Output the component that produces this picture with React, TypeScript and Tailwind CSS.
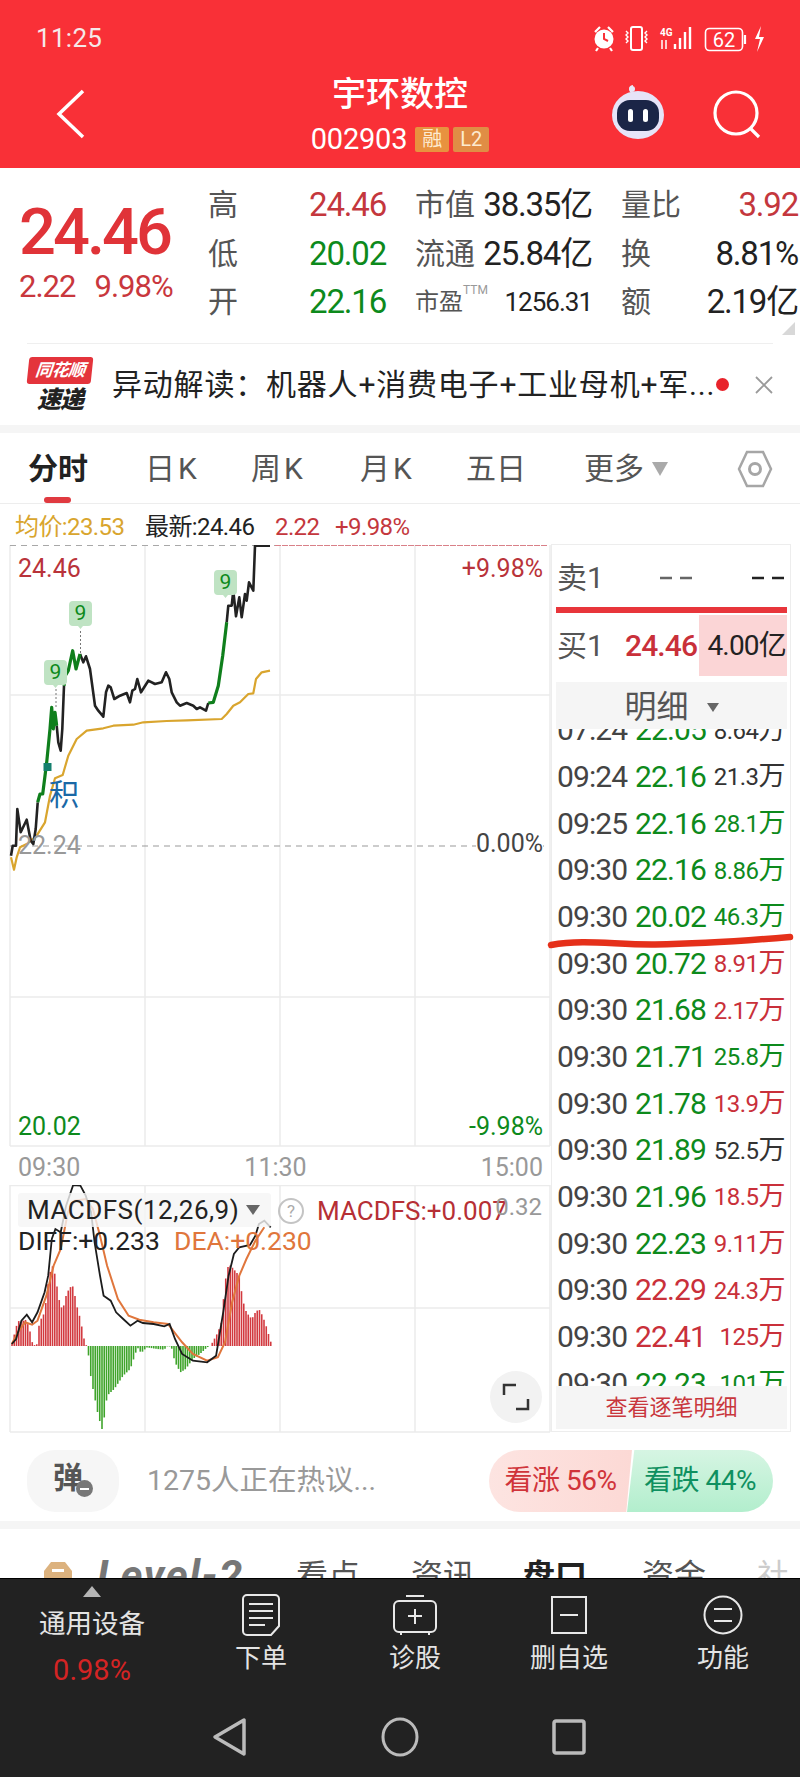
import React from "react";

const pts = (a: number[][], sx: number, oy: number) =>
  a.map(([x, y]) => `${(x / sx).toFixed(1)},${(y / 3 + oy).toFixed(1)}`).join(" ");

const P = (a: number[][]) => pts(a, 3, 530);
const M = (a: number[][]) => pts(a, 2.8, 1170);

const black1 = [[33,980],[38,950],[48,950],[52,840],[62,910],[80,872],[92,935],[100,945],[107,900],[113,820]];
const green1 = [[113,820],[120,795],[128,795],[140,700],[150,600],[155,535],[160,600],[165,550],[170,590]];
const black2 = [[170,590],[175,640],[182,665],[187,600],[192,470]];
const green2 = [[192,470],[196,440],[205,425],[218,365],[228,420],[240,375]];
const black3 = [[240,375],[250,400],[258,382],[270,420],[285,530],[295,545],[310,563],[318,490],[325,470],[332,475],[343,510],[360,500],[380,492],[390,520],[397,485],[405,480],[412,450],[423,490],[445,455],[465,465],[485,460],[498,430],[508,450],[515,490],[530,520],[540,530],[560,522],[580,530],[590,540],[600,535],[618,545],[625,522]];
const green3 = [[625,522],[640,520],[655,470],[668,380],[680,280]];
const black4 = [[680,280],[685,230],[695,230],[700,185],[708,262],[718,205],[725,265],[735,195],[740,215],[747,160],[760,185],[765,50],[810,50]];
const avg = [[33,985],[42,1022],[50,985],[60,955],[80,945],[110,920],[135,880],[150,800],[165,748],[188,738],[205,680],[230,630],[260,605],[310,598],[340,590],[400,587],[430,580],[500,576],[560,574],[665,570],[680,555],[700,530],[720,520],[745,495],[760,493],[768,450],[785,430],[810,425]];

const hist = [[33,525],[50,455],[60,460],[70,450],[80,470],[88,505],[92,530],[105,525],[110,460],[125,430],[135,340],[145,285],[155,320],[165,390],[175,425],[185,380],[195,355],[205,352],[215,410],[225,450],[238,525],[243,530],[245,532],[255,630],[265,685],[275,740],[287,785],[300,680],[320,660],[345,620],[365,600],[385,535],[392,548],[400,548],[410,535],[440,540],[460,542],[470,530],[480,535],[490,580],[505,610],[520,600],[540,570],[560,555],[580,535],[590,530],[600,510],[610,490],[620,460],[630,340],[640,285],[650,295],[670,320],[680,395],[690,430],[705,450],[715,430],[725,420],[735,440],[745,470],[760,525]];
const diff = [[33,525],[45,510],[60,455],[75,437],[90,460],[105,430],[125,370],[135,320],[145,210],[155,180],[170,190],[185,110],[205,48],[225,50],[240,80],[255,130],[265,220],[280,320],[290,380],[310,395],[325,430],[345,450],[365,470],[385,455],[400,462],[430,465],[460,472],[475,465],[490,510],[510,555],[540,575],[580,580],[605,560],[625,430],[640,320],[655,255],[670,235],[700,228],[715,200],[725,165],[740,155],[758,175]];
const dea = [[33,525],[50,490],[70,460],[90,467],[105,455],[130,380],[150,290],[170,240],[190,130],[210,95],[240,90],[260,120],[280,200],[300,290],[330,390],[360,440],[390,452],[430,460],[470,465],[510,520],[540,555],[580,575],[610,565],[630,520],[650,400],[670,320],[690,270],[715,215],[740,175]];

function histAt(x: number) {
  for (let i = 1; i < hist.length; i++) {
    if (x <= hist[i][0]) {
      const [x0, y0] = hist[i - 1];
      const [x1, y1] = hist[i];
      return y0 + ((y1 - y0) * (x - x0)) / (x1 - x0);
    }
  }
  return 530;
}

const bars: { x: number; y: number }[] = [];
for (let i = 0; i < 116; i++) {
  const px = 12 + i * 2.25;
  bars.push({ x: px, y: histAt(px * 2.8) / 3 + 1170 });
}

const G = "text-[#0d8a1c]";
const R = "text-[#c9303a]";
const D = "text-[#333333]";

const trades: [string, string, string, string, string][] = [
  ["07:24", "22.05", "8.64", G, D],
  ["09:24", "22.16", "21.3", G, D],
  ["09:25", "22.16", "28.1", G, G],
  ["09:30", "22.16", "8.86", G, G],
  ["09:30", "20.02", "46.3", G, G],
  ["09:30", "20.72", "8.91", G, R],
  ["09:30", "21.68", "2.17", G, R],
  ["09:30", "21.71", "25.8", G, G],
  ["09:30", "21.78", "13.9", G, R],
  ["09:30", "21.89", "52.5", G, D],
  ["09:30", "21.96", "18.5", G, R],
  ["09:30", "22.23", "9.11", G, R],
  ["09:30", "22.29", "24.3", R, R],
  ["09:30", "22.41", "125", R, R],
  ["09:30", "22.23", "101", G, G],
];

function Badge9({ x, y }: { x: number; y: number }) {
  return (
    <g transform={`translate(${x} ${y})`}>
      <path d="M4 0h15a4 4 0 0 1 4 4v17a4 4 0 0 1-4 4h-5l-2.500 3-2.500-3H4a4 4 0 0 1-4-4V4a4 4 0 0 1 4-4z" fill="#bfe3c3" />
      <text x="11.500" y="19" textAnchor="middle" fontSize="21" fill="#0d8a1c" fontFamily="Roboto">9</text>
    </g>
  );
}

function MainChart() {
  return (
    <svg viewBox="0 546 551 602" className="block h-[602px] w-[551px]">
      <g stroke="#ebebeb" strokeWidth="1.500" fill="none">
        <path d="M10 546V1147M145 546V1147M280 546V1147M415 546V1147M550 546V1147M10 696H550M10 998H550M10 1147H550" />
      </g>
      <path d="M10 546.500H275" stroke="#a8a8a8" strokeDasharray="6 5" fill="none" />
      <path d="M275 546.500H548" stroke="#d98088" strokeDasharray="6 1" fill="none" />
      <path d="M10 847H548" stroke="#999999" strokeDasharray="6 5" fill="none" />
      <polyline points={P(avg)} fill="none" stroke="#d9a52e" strokeWidth="2.200" strokeLinejoin="round" />
      <path d="M56 690V710M80.500 632V655" stroke="#777777" strokeDasharray="2 2" />
      <g fill="none" strokeLinejoin="round">
        {[black1, black2, black3, black4].map((a, i) => (
          <polyline key={i} points={P(a)} stroke="#222222" strokeWidth="2.600" />
        ))}
        {[green1, green2, green3].map((a, i) => (
          <polyline key={i} points={P(a)} stroke="#0f7f1c" strokeWidth="3.200" />
        ))}
      </g>
      <rect x="43.500" y="764" width="8" height="8" fill="#15806e" />
      <Badge9 x={44} y={661} />
      <Badge9 x={69} y={602} />
      <Badge9 x={214} y={571} />
      <text x="49" y="806" fontSize="30" fill="#1a68a6" fontFamily="Noto Sans CJK SC">积</text>
    </svg>
  );
}

function MacdChart() {
  return (
    <svg viewBox="0 1186 551 248" className="block h-[248px] w-[551px]">
      <path d="M10 1186V1433M145 1186V1433M280 1186V1433M415 1186V1433M550 1186V1433M10 1186.500H550M10 1309H550M10 1433H550" stroke="#ebebeb" strokeWidth="1.500" fill="none" />
      {bars.map((b, i) => (
        <line key={i} x1={b.x} x2={b.x} y1={1347} y2={b.y} stroke={b.y <= 1347 ? "#d2393f" : "#3fa42b"} strokeWidth="1.600" />
      ))}
      <polyline points={M(dea)} fill="none" stroke="#e0763c" strokeWidth="2" />
      <polyline points={M(diff)} fill="none" stroke="#1c1c1c" strokeWidth="1.800" />
    </svg>
  );
}

function BottomItem({ icon, label }: { icon: React.ReactNode; label: string }) {
  return (
    <div className="flex w-[136px] flex-col items-center">
      <div className="flex h-[42px] w-[136px] items-center justify-center">{icon}</div>
      <div className="mt-[4px] text-[26px] leading-[36px] text-[#e4e4e4]">{label}</div>
    </div>
  );
}

const num = "text-[33px] tracking-[-1.200px]";

export default function App() {
  return (
    <div className="relative flex h-[1778px] w-[800px] flex-col overflow-hidden bg-white font-[Roboto,'Noto_Sans_CJK_SC',sans-serif]">
      {/* header */}
      <div className="flex h-[168px] flex-col bg-[#f93037] text-white">
        <div className="flex h-[76px] items-start justify-between pt-[24px] pl-[36px] pr-[32px]">
          <span className="text-[26px] leading-[28px] tracking-[0.3px] text-[#f5e8e8]">11:25</span>
          <svg width="176" height="30" viewBox="0 0 176 30" fill="none" stroke="white" strokeWidth="1.800">
            <circle cx="12" cy="15" r="9.500" fill="white" stroke="none" />
            <path d="M12 9v6l4 2" stroke="#f93037" strokeWidth="2" />
            <path d="M3 8l5-5M21 8l-5-5M6 24l-2 3M18 24l2 3" strokeWidth="2.200" />
            <rect x="39" y="3" width="11" height="23" rx="2" strokeWidth="2" />
            <path d="M34 7l2 2-2 2 2 2-2 2 2 2-2 2M55 7l-2 2 2 2-2 2 2 2-2 2 2 2" strokeWidth="1.400" />
            <text x="68" y="12" fontSize="10" fill="white" stroke="none" fontWeight="700">4G</text>
            <path d="M70 16v9M74 16v9" strokeWidth="1.500" />
            <path d="M83 20v5M88 14v11M93 8v17M98 3v22" strokeWidth="2.400" />
            <rect x="113.500" y="4.500" width="37" height="22" rx="4" strokeWidth="1.600" />
            <text x="132" y="23" textAnchor="middle" fontSize="20" fill="white" stroke="none">62</text>
            <path d="M153 11v9" strokeWidth="2.200" />
            <path d="M169 2l-6 13h5l-3 13 7-15h-5z" fill="white" stroke="none" />
          </svg>
        </div>
        <div className="relative flex flex-col items-center">
          <div className="text-[34px] font-medium leading-[36px]">宇环数控</div>
          <div className="mt-[13px] flex items-center">
            <span className="text-[29px] leading-[28px] tracking-[-0.2px]">002903</span>
            <span className="ml-[8px] flex h-[25px] w-[34px] items-center justify-center rounded-[2px] bg-[#e8923f] text-[20px] text-[#fdebd0]">融</span>
            <span className="ml-[4px] flex h-[25px] w-[36px] items-center justify-center rounded-[2px] bg-[#e08d45] text-[20px] text-[#fdebd0]">L2</span>
          </div>
          <svg className="absolute left-[54px] top-[12px]" width="34" height="52" viewBox="0 0 34 52" fill="none">
            <path d="M29 3L5 26l24 23" stroke="white" strokeWidth="3.500" />
          </svg>
          <svg className="absolute left-[608px] top-[8px]" width="60" height="56" viewBox="0 0 60 56">
            <path d="M23 8c-2-4 0-6 2-6" stroke="#e9e7f7" strokeWidth="2" fill="none" />
            <circle cx="24" cy="5" r="3" fill="#e9e7f7" />
            <ellipse cx="30" cy="31" rx="26" ry="24" fill="#e6e4f8" />
            <rect x="9" y="16" width="42" height="31" rx="13" fill="#1b2547" />
            <rect x="20" y="25" width="5" height="13" rx="2.500" fill="white" />
            <rect x="35" y="25" width="5" height="13" rx="2.500" fill="white" />
          </svg>
          <svg className="absolute left-[712px] top-[12px]" width="56" height="56" viewBox="0 0 56 56" fill="none" stroke="white" strokeWidth="3.200">
            <circle cx="24" cy="25" r="21" />
            <path d="M38 40l9 9" />
          </svg>
        </div>
      </div>

      {/* quote */}
      <div className="relative flex h-[176px] items-start pt-[13px]">
        <div className="w-[208px] pl-[19px]">
          <div className="mt-[19px] text-[65px] font-medium leading-[64px] tracking-[-3px] text-[#e03338]">24.46</div>
          <div className="mt-[3px] flex gap-[19px] text-[31px] leading-[40px] tracking-[-1px] text-[#c9373d]">
            <span>2.22</span>
            <span>9.98%</span>
          </div>
        </div>
        <div className="grid w-[590px] grid-cols-[178px_177px_177px] grid-rows-[48.500px_48.500px_48.500px] items-center gap-x-[29px] text-[30px] leading-[48px] text-[#555555]">
          <span className="flex items-center justify-between whitespace-nowrap">高<b className={`${num} font-normal text-[#c4373d]`}>24.46</b></span>
          <span className="flex items-center justify-between whitespace-nowrap">市值<b className={`${num} font-normal text-[#222222]`}>38.35亿</b></span>
          <span className="flex items-center justify-between whitespace-nowrap">量比<b className={`${num} font-normal text-[#c4373d]`}>3.92</b></span>

          <span className="flex items-center justify-between whitespace-nowrap">低<b className={`${num} font-normal text-[#0d8a1c]`}>20.02</b></span>
          <span className="flex items-center justify-between whitespace-nowrap">流通<b className={`${num} font-normal text-[#222222]`}>25.84亿</b></span>
          <span className="flex items-center justify-between whitespace-nowrap">换<b className={`${num} font-normal text-[#222222]`}>8.81%</b></span>

          <span className="flex items-center justify-between whitespace-nowrap">开<b className={`${num} font-normal text-[#0d8a1c]`}>22.16</b></span>
          <span className="flex items-center justify-between whitespace-nowrap text-[24px]">
            <span className="flex items-start">市盈<span className="mt-[6px] text-[12px] leading-none text-[#999999]">TTM</span></span>
            <b className="text-[26px] font-normal tracking-[-1px] text-[#222222]">1256.31</b>
          </span>
          <span className="flex items-center justify-between whitespace-nowrap">额<b className={`${num} font-normal text-[#222222]`}>2.19亿</b></span>
        </div>
        <svg className="absolute left-[782px] top-[154px]" width="13" height="13" viewBox="0 0 13 13"><path d="M13 0v13H0z" fill="#d8d8d8" /></svg>
        <div className="absolute bottom-0 left-[27px] h-px w-[746px] bg-[#efefef]" />
      </div>

      {/* alert */}
      <div className="flex h-[81px] items-center pl-[27px]">
        <div className="flex h-[56px] w-[66px] flex-col items-center">
          <div className="flex h-[27px] w-[64px] skew-x-[-6deg] items-center justify-center rounded-[3px] bg-[#e4343c] text-[17px] font-bold italic leading-none tracking-[-0.500px] text-white">同花顺</div>
          <div className="mt-[3px] text-[24px] font-black italic leading-[26px] tracking-[-1px] text-[#222222]">速递</div>
        </div>
        <div className="ml-[19px] w-[604px] whitespace-nowrap text-[30px] leading-[40px] tracking-[0.800px] text-[#222222]">异动解读：机器人+消费电子+工业母机+军...</div>
        <div className="h-[13px] w-[13px] rounded-full bg-[#e8232b]" />
        <svg className="ml-[26px]" width="18" height="18" viewBox="0 0 18 18" stroke="#9a9a9a" strokeWidth="1.800"><path d="M1 1l16 16M17 1L1 17" /></svg>
      </div>
      <div className="h-[8px] bg-[#f5f5f5]" />

      {/* tabs */}
      <div className="relative flex h-[71px] items-center border-b border-[#ededed] pt-[2px] pl-[28px] text-[30px] leading-[36px] text-[#555555]">
        <span className="w-[117px] font-bold text-[#222222]">分时</span>
        <span className="w-[106px] tracking-[3px]">日K</span>
        <span className="w-[109px] tracking-[3px]">周K</span>
        <span className="w-[106px] tracking-[3px]">月K</span>
        <span className="w-[118px]">五日</span>
        <span>更多</span>
        <svg className="ml-[8px]" width="16" height="14" viewBox="0 0 16 14"><path d="M0 0h16L8 14z" fill="#aaaaaa" /></svg>
        <svg className="ml-[69px]" width="36" height="40" viewBox="0 0 36 40" fill="none" stroke="#a6a6a6" strokeWidth="2.500">
          <path d="M10 3h16l8 17-8 17H10L2 20z" />
          <circle cx="18" cy="20" r="5.500" strokeWidth="3" />
        </svg>
        <div className="absolute bottom-0 left-[44px] h-[6px] w-[27px] rounded-[3px] bg-[#e03a40]" />
      </div>

      {/* info row */}
      <div className="flex h-[40px] items-center pt-[5px] pl-[15px] text-[24px] leading-[28px] tracking-[-0.6px]">
        <span className="w-[130px] text-[#d9a52e]">均价:23.53</span>
        <span className="w-[130px] text-[#222222]">最新:24.46</span>
        <span className="w-[60px] text-[#c4373d]">2.22</span>
        <span className="text-[#c4373d]">+9.98%</span>
      </div>

      {/* main */}
      <div className="relative flex h-[889px]">
        <div className="flex w-[551px] flex-col pt-[1px]">
          <div className="relative h-[602px]">
            <MainChart />
            <span className="absolute left-[18px] top-[10px] text-[25px] leading-[28px] text-[#b9333a]">24.46</span>
            <span className="absolute right-[8px] top-[10px] text-[25px] leading-[28px] text-[#b9333a]">+9.98%</span>
            <span className="absolute left-[18px] top-[287px] text-[25px] leading-[28px] text-[#999999]">22.24</span>
            <span className="absolute right-[8px] top-[285px] bg-white text-[25px] leading-[28px] text-[#444444]">0.00%</span>
            <span className="absolute left-[18px] top-[568px] text-[25px] leading-[28px] text-[#0d8a1c]">20.02</span>
            <span className="absolute right-[8px] top-[568px] text-[25px] leading-[28px] text-[#0d8a1c]">-9.98%</span>
          </div>
          <div className="flex h-[38px] items-center justify-between pt-[3px] pl-[18px] pr-[8px] text-[25px] leading-[28px] text-[#999999]">
            <span>09:30</span>
            <span className="-ml-[10px]">11:30</span>
            <span>15:00</span>
          </div>
          <div className="relative h-[248px]">
            <MacdChart />
            <div className="absolute left-[18px] top-[8px] flex h-[34px] w-[253px] items-center rounded-[3px] bg-[#f5f5f5]/80 pl-[9px] text-[26px] leading-[34px] tracking-[0.5px] text-[#222222]">
              MACDFS(12,26,9)
              <svg className="ml-[7px]" width="14" height="10" viewBox="0 0 14 10"><path d="M0 0h14L7 10z" fill="#666666" /></svg>
            </div>
            <div className="absolute left-[278px] top-[13px] flex h-[26px] w-[26px] items-center justify-center rounded-full border-2 border-[#c4c4c4] text-[17px] leading-none text-[#aaaaaa]">?</div>
            <span className="absolute left-[317px] top-[10px] text-[26px] leading-[32px] text-[#b62f35]">MACDFS:+0.007</span>
            <span className="absolute right-[9px] top-[7px] text-[24px] leading-[30px] text-[#999999]">0.32</span>
            <span className="absolute left-[18px] top-[40px] text-[26.500px] leading-[32px] text-[#222222]">DIFF:+0.233</span>
            <span className="absolute left-[174px] top-[40px] text-[26.500px] leading-[32px] text-[#e0763c]">DEA:+0.230</span>
            <div className="absolute left-[490px] top-[186px] flex h-[52px] w-[52px] items-center justify-center rounded-full bg-[#f2f2f2]">
              <svg width="28" height="28" viewBox="0 0 28 28" fill="none" stroke="#333333" strokeWidth="2.500"><path d="M2 12V2h12M26 16v10H14" /></svg>
            </div>
          </div>
        </div>

        {/* right panel */}
        <div className="flex h-[888px] w-[240px] flex-col border border-[#ededed] pl-[4px] pr-[3px]">
          <div className="flex h-[62px] items-center pt-[3px] pl-[1px] text-[30px] leading-[36px] text-[#555555]">
            <span className="w-[103px]">卖1</span>
            <svg width="32" height="4" viewBox="0 0 32 4"><path d="M0 2h12M20 2h12" stroke="#666666" strokeWidth="2.500" /></svg>
            <svg className="ml-[60px]" width="32" height="4" viewBox="0 0 32 4"><path d="M0 2h12M20 2h12" stroke="#222222" strokeWidth="2.500" /></svg>
          </div>
          <div className="h-[6px] bg-[#e8353b]" />
          <div className="mt-[2px] flex h-[61px] items-center pl-[1px] text-[30px] leading-[36px] text-[#555555]">
            <span className="w-[68px]">买1</span>
            <span className="w-[74px] text-[30px] font-medium tracking-[-0.9px] text-[#c9303a]">24.46</span>
            <span className="flex h-[61px] flex-1 items-center justify-end bg-[#fbd5d6] pr-[1px] text-[28px] tracking-[-0.8px] text-[#222222]">4.00亿</span>
          </div>
          <div className="mt-[6px] flex h-[47px] items-center justify-center bg-[#f5f5f5] pt-[3px] text-[32px] text-[#555555]">
            明细
            <svg className="ml-[18px]" width="12" height="9" viewBox="0 0 12 9"><path d="M0 0h12L6 9z" fill="#666666" /></svg>
          </div>
          <div className="h-[657px] overflow-hidden">
            <div className="-mt-[22px]">
              {trades.map((t, i) => (
                <div key={i} className="flex h-[46.670px] items-center pl-[1px] text-[30px] leading-[46px]">
                  <span className="w-[78px] tracking-[-0.9px] text-[#444444]">{t[0]}</span>
                  <span className={`w-[70px] tracking-[-0.9px] ${t[3]}`}>{t[1]}</span>
                  <span className={`flex-1 pr-[2px] text-right text-[24px] tracking-[-0.5px] ${t[4]}`}>
                    {t[2]}
                    <span className="text-[27px]">万</span>
                  </span>
                </div>
              ))}
            </div>
          </div>
          <div className="flex h-[43px] items-center justify-center bg-[#f5f5f5] text-[22px] text-[#c9373d]">查看逐笔明细</div>
        </div>

        <svg className="absolute left-[545px] top-[382px]" width="255" height="24" viewBox="0 0 255 24" fill="none">
          <path d="M6 19C40 13 70 19 110 18.500 150 18 210 14 245 11" stroke="#e5301a" strokeWidth="6.500" strokeLinecap="round" />
        </svg>
      </div>

      {/* comment row */}
      <div className="flex h-[88px] items-center pb-[1px] pl-[27px] pt-[9px]">
        <div className="relative flex h-[62px] w-[92px] items-center justify-center rounded-[28px] bg-[#f6f6f6]">
          <span className="-mt-[6px] -ml-[10px] text-[30px] font-bold leading-none text-[#555555]">弹</span>
          <span className="absolute left-[49px] top-[30px] flex h-[17px] w-[17px] items-center justify-center rounded-full bg-[#777777]"><span className="h-[2px] w-[9px] bg-white" /></span>
        </div>
        <span className="ml-[28px] w-[342px] text-[28.500px] leading-[36px] text-[#999999]">1275人正在热议...</span>
        <div className="flex h-[62px] w-[284px]">
          <div className="flex w-[143px] items-center justify-center rounded-l-[31px] bg-gradient-to-r from-[#fde4e1] to-[#fcd9d5] text-[28px] tracking-[-0.5px] text-[#d0343a] [clip-path:polygon(0_0,100%_0,96%_100%,0_100%)]">看涨 56%</div>
          <div className="-ml-[5px] flex w-[146px] items-center justify-center rounded-r-[31px] bg-gradient-to-b from-[#d6f5e3] to-[#b2eecd] text-[28px] tracking-[-0.5px] text-[#0f9060] [clip-path:polygon(5%_0,100%_0,100%_100%,0_100%)]">看跌 44%</div>
        </div>
      </div>
      <div className="h-[8px] bg-[#f5f5f5]" />

      {/* cut-off tabs */}
      <div className="relative flex h-[49px] items-start overflow-hidden pl-[43px] pt-[30px] text-[32px] leading-[34px] text-[#555555]">
        <svg width="30" height="30" viewBox="0 0 30 30"><path d="M8 3h14l7 9v15H1V12z" fill="#dcb27e" /><rect x="9" y="10" width="12" height="3" fill="white" /></svg>
        <span className="ml-[24px] w-[199px] text-[42px] font-bold italic tracking-[1.500px] text-[#777777]">Level-2</span>
        <span className="w-[115px]">看点</span>
        <span className="w-[112px]">资讯</span>
        <span className="w-[119px] font-bold text-[#222222]">盘口</span>
        <span className="w-[115px]">资金</span>
        <span className="text-[#cccccc]">社</span>
      </div>

      {/* bottom bar */}
      <div className="flex h-[199px] flex-col border-t border-black bg-[#222222]">
        <div className="flex h-[118px]">
          <div className="flex w-[184px] flex-col items-center pt-[7px]">
            <svg width="18" height="11" viewBox="0 0 18 11"><path d="M9 0l9 11H0z" fill="#b5b5b5" /></svg>
            <div className="mt-[9px] text-[26.500px] leading-[36px] text-[#e4e4e4]">通用设备</div>
            <div className="mt-[11px] text-[29px] leading-[34px] text-[#d42424]">0.98%</div>
          </div>
          <div className="ml-[9px] flex pt-[15px]">
            <BottomItem
              label="下单"
              icon={
                <svg width="38" height="42" viewBox="0 0 38 42" fill="none" stroke="#e8e8e8" strokeWidth="2">
                  <path d="M5 1h28a4 4 0 0 1 4 4v27l-8 9H5a4 4 0 0 1-4-4V5a4 4 0 0 1 4-4z" />
                  <path d="M7 10h24M7 17h24M7 24h24M7 31h16" />
                </svg>
              }
            />
            <div className="w-[18px]" />
            <BottomItem
              label="诊股"
              icon={
                <svg width="44" height="42" viewBox="0 0 44 42" fill="none" stroke="#e8e8e8" strokeWidth="2">
                  <rect x="1" y="7" width="42" height="31" rx="5" />
                  <path d="M13 2h18M22 15v15M15 22h14" />
                  <path d="M8 38v3M36 38v3" />
                </svg>
              }
            />
            <div className="w-[18px]" />
            <BottomItem
              label="删自选"
              icon={
                <svg width="38" height="38" viewBox="0 0 38 38" fill="none" stroke="#e8e8e8" strokeWidth="2">
                  <rect x="2" y="1" width="34" height="36" />
                  <path d="M10 19h18" />
                </svg>
              }
            />
            <div className="w-[18px]" />
            <BottomItem
              label="功能"
              icon={
                <svg width="40" height="40" viewBox="0 0 40 40" fill="none" stroke="#e8e8e8" strokeWidth="2">
                  <circle cx="20" cy="20" r="18.500" />
                  <path d="M11 14h18M11 26h18" />
                </svg>
              }
            />
          </div>
        </div>
        <div className="flex flex-1 items-center pl-[212px]">
          <svg width="36" height="40" viewBox="0 0 36 40" fill="none" stroke="#bbbbbb" strokeWidth="3.500" strokeLinejoin="round"><path d="M32 3v34L3 20z" /></svg>
          <svg className="ml-[133px]" width="38" height="40" viewBox="0 0 38 40" fill="none" stroke="#bbbbbb" strokeWidth="3"><ellipse cx="19" cy="20" rx="17" ry="18" /></svg>
          <svg className="ml-[133px]" width="34" height="36" viewBox="0 0 34 36" fill="none" stroke="#bbbbbb" strokeWidth="3.500"><rect x="2" y="2" width="30" height="32" rx="2" /></svg>
        </div>
      </div>
    </div>
  );
}
